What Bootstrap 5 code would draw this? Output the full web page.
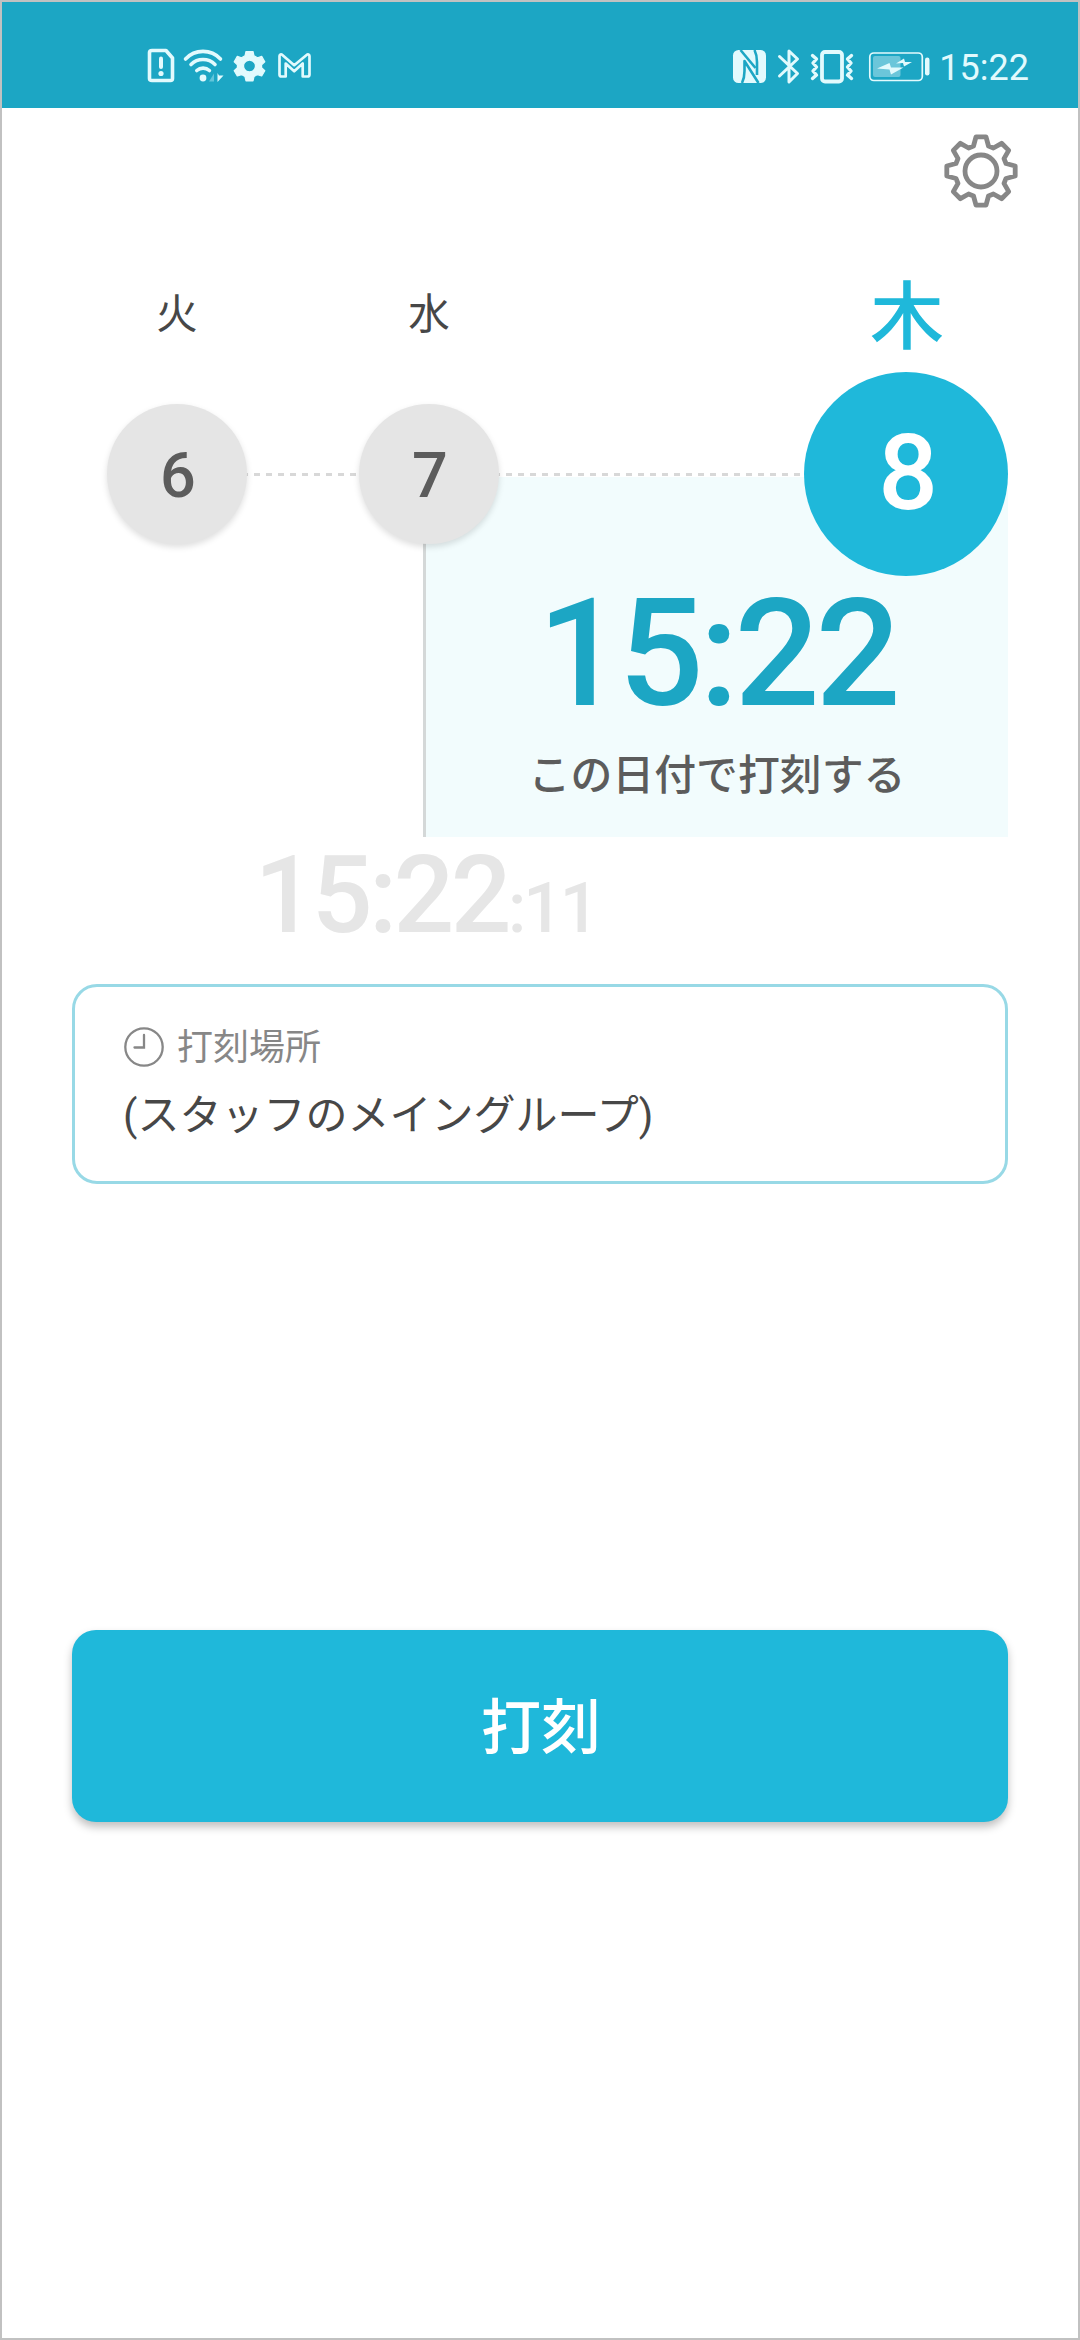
<!DOCTYPE html>
<html lang="ja">
<head>
<meta charset="utf-8">
<meta name="viewport" content="width=device-width, initial-scale=1">
<title>打刻</title>
<link href="https://cdn.jsdelivr.net/npm/bootstrap@5.3.0/dist/css/bootstrap.min.css" rel="stylesheet">
<style>
  body { font-family: Roboto, "Noto Sans CJK JP", sans-serif; color: #474747; }
  .screen { width: 1080px; height: 2340px; background: #fff; }
  .screen::after { content: ""; position: absolute; inset: 0; border: 2px solid #c1c1c1; pointer-events: none; z-index: 5; }
  .statusbar { height: 108px; background: #1ca6c4; color: #e2fafd; padding: 46px 51px 0 144px; }
  .statusbar svg { display: block; }
  .status-time { font-size: 36px; line-height: 40px; padding-top: 2px; margin-left: 6px; }
  .toolbar { height: 126px; padding-right: 59px; }
  .jp { font-family: "Noto Sans CJK JP", sans-serif; }
  .weekdays, .days { padding-left: 107px; padding-right: 72px; }
  .weekdays { height: 138px; padding-top: 16px; }
  .cell-sm { width: 140px; font-size: 41.5px; padding-top: 2px; }
  .cell-lg { width: 204px; font-size: 74px; color: #1fb8da; font-weight: 500; padding-left: 2px; }
  .gap-days { gap: 112px; }
  .days { height: 204px; z-index: 2; }
  .dashes { left: 242px; width: 600px; top: 101px; height: 3px; background: repeating-linear-gradient(90deg, #d8d8d8 0 6px, transparent 6px 12px); z-index: -1; }
  .day { width: 140px; height: 140px; background: #e5e5e5; color: #5c5c5c; font-size: 63px; font-weight: 500; padding: 3px 0 0 2px; box-shadow: 0 3px 6px rgba(0,0,0,.13); }
  .day-today { width: 204px; height: 204px; background: #1fb8da; color: #fff; font-size: 105px; font-weight: 500; padding: 0 0 2px 4px; }
  .panel { margin: -99px 72px 0 423px; height: 360px; background: #f2fcfd; border-left: 3px solid #d4d8d8; padding-top: 102px; }
  .panel-time { font-size: 150px; line-height: 150px; font-weight: 500; color: #1ca6c4; letter-spacing: -4.3px; }
  .panel-note { font-size: 41.9px; line-height: 60px; margin-top: 13px; font-weight: 500; color: #5c5c5c; }
  .clock { height: 147px; padding-left: 254.5px; color: #e6e6e6; font-weight: 500; line-height: 117px; font-size: 107px; letter-spacing: -3.6px; }
  .clock-sec { font-size: 69.5px; letter-spacing: -3px; }
  .place { margin: 0 72px; height: 200px; border: 3px solid #98d9e6; border-radius: 25px; padding: 33px 0 0 48px; }
  .place-label { height: 54px; font-size: 36px; line-height: 54px; color: #878787; gap: 12px; }
  .place-label span { padding-bottom: 7px; }
  .place-name { font-size: 42px; line-height: 62px; margin-top: 11px; }
  .punch { margin: 446px 72px 0; height: 192px; padding: 0 0 7px 2px; border: 0; border-radius: 24px; background: #1fb8da !important; color: #fff !important; font-size: 60px; font-weight: 500; box-shadow: 0 5px 8px rgba(0,0,0,.25); }
</style>
</head>
<body>
<div class="screen position-relative d-flex flex-column overflow-hidden">

  <header class="statusbar d-flex justify-content-between align-items-start">
    <svg width="176" height="40" viewBox="144 46 176 40" fill="none" stroke="currentColor">
      <path d="M152 50.500h14l6.500 7.500v20.500q0 2-2 2h-18.500q-2.500 0-2.500-2v-26q0-2 2.500-2z" stroke-width="3.600" stroke-linejoin="round"/>
      <path d="M161 58.500v8.500" stroke-width="4" stroke-linecap="round"/><circle cx="161" cy="73.500" r="2.600" fill="currentColor" stroke="none"/>
      <g stroke-width="3.600" stroke-linecap="round"><path d="M185.500 59a24 24 0 0 1 35 0"/><path d="M191 64.500a17 17 0 0 1 24 0"/><path d="M196.800 70.500a9.500 9.500 0 0 1 12.600 0"/></g>
      <circle cx="203" cy="78" r="3.400" fill="currentColor" stroke="none"/>
      <path d="M214 73.500v8h-5z" fill="#62c5da" stroke="none"/><path d="M217.500 73l1.500 2.500h4.500l-6 6.500z" fill="currentColor" stroke="none"/>
      <path transform="translate(249.500 66)" fill="currentColor" stroke-width="1.200" stroke-linejoin="round" fill-rule="evenodd" d="M-3.500-14.500h7l1 4.300 3.500 2 4.200-1.400 3.100 5.300-3.200 3v3l3.200 3-3.100 5.300-4.200-1.400-3.500 2-1 4.300h-7l-1-4.300-3.500-2-4.200 1.400-3.100-5.300 3.200-3v-3l-3.200-3 3.100-5.300 4.200 1.400 3.500-2zM0-5.900a5.900 5.900 0 1 0 .01 0z"/>
      <path d="M281.800 54.500q-2.300-.5-2.300 1.800v18.200q0 2 2 2h4.200v-13l8.500 7.800 8.500-7.800v13h4.800q2 0 2-2v-18.200q0-2.300-2.300-1.800l-13 10.700z" stroke-width="2.700" stroke-linejoin="round"/>
    </svg>
    <div class="d-flex align-items-start">
      <svg width="204" height="40" viewBox="729 46 204 40" fill="none" stroke="currentColor">
        <rect x="733" y="50" width="33" height="33" rx="5.500" fill="currentColor" stroke="none"/>
        <g stroke="#1ca6c4" stroke-width="2.600" stroke-linejoin="round">
          <path d="M740.500 50L755.500 68"/>
          <path d="M754.500 50q2.500 5 2.500 12v13"/>
          <path d="M742 83q2.500-5 2.500-12V61L758.500 83"/>
        </g>
        <path d="M779.500 56.500l18 17-8.500 8.500v-31l8.500 8-18 17" stroke-width="3" stroke-linecap="round" stroke-linejoin="round"/>
        <rect x="822" y="52" width="20" height="29.500" rx="3" stroke-width="3.800"/>
        <path d="M812.500 55.500l4 3.500-3.500 4 3.500 4-3.500 4 3.500 4-4 3.500M851.500 55.500l-4 3.500 3.500 4-3.500 4 3.500 4-3.500 4 4 3.500" stroke-width="3.400" stroke-linejoin="round" stroke-linecap="round"/>
        <rect x="869.800" y="53" width="52.500" height="27.500" rx="4" stroke-width="1.700"/>
        <rect x="873" y="56" width="27.500" height="21" rx="2" fill="#6bc6da" stroke="none"/>
        <path d="M877 68.500l12.500-5.500 1.500 4.500h12.500l-12.500 7-1.500-5zM896 63.500l8-5 1 3.500h7l-8 4.500-1-3.500z" fill="currentColor" stroke="none"/>
        <rect x="925" y="57.500" width="4.500" height="18" rx="2.200" fill="currentColor" stroke="none"/>
      </svg>
      <div class="status-time">15:22</div>
    </div>
  </header>

  <div class="toolbar d-flex justify-content-end align-items-center">
    <svg width="80" height="80" viewBox="-40 -40 80 80" fill="none" stroke="#878787" stroke-width="4.800" stroke-linejoin="round">
      <path d="M-5-34.200H5L7.500-25 12.400-23 20.600-27.700 27.700-20.600 23-12.400 25-7.500 34.200-5V5L25 7.500 23 12.400 27.700 20.600 20.600 27.700 12.400 23 7.500 25 5 34.200H-5L-7.500 25-12.400 23-20.600 27.700-27.700 20.600-23 12.400-25 7.500-34.200 5V-5L-25-7.500-23-12.400-27.700-20.600-20.600-27.700-12.400-23-7.500-25Z"/>
      <circle r="16"/>
    </svg>
  </div>

  <div class="weekdays jp d-flex align-items-center text-center lh-1">
    <div class="d-flex gap-days"><div class="cell-sm">火</div><div class="cell-sm">水</div></div>
    <div class="cell-lg ms-auto">木</div>
  </div>

  <div class="days position-relative d-flex align-items-center lh-1">
    <div class="dashes position-absolute"></div>
    <div class="d-flex gap-days">
      <div class="day rounded-circle d-flex align-items-center justify-content-center">6</div>
      <div class="day rounded-circle d-flex align-items-center justify-content-center">7</div>
    </div>
    <div class="day-today rounded-circle d-flex align-items-center justify-content-center ms-auto">8</div>
  </div>

  <section class="panel text-center">
    <div class="panel-time">15:22</div>
    <div class="panel-note jp">この日付で打刻する</div>
  </section>

  <div class="clock">15:22<span class="clock-sec">:11</span></div>

  <section class="place">
    <div class="place-label d-flex align-items-center">
      <svg width="42" height="42" viewBox="0 0 42 42" fill="none" stroke="currentColor" stroke-width="2.300" stroke-linecap="round"><circle cx="21" cy="21" r="18.700"/><path d="M21 9v12.500H11.500"/></svg>
      <span class="jp">打刻場所</span>
    </div>
    <div class="place-name">(スタッフのメイングループ)</div>
  </section>

  <button type="button" class="punch btn jp">打刻</button>
</div>
<script src="https://cdn.jsdelivr.net/npm/bootstrap@5.3.0/dist/js/bootstrap.bundle.min.js"></script>
</body>
</html>
